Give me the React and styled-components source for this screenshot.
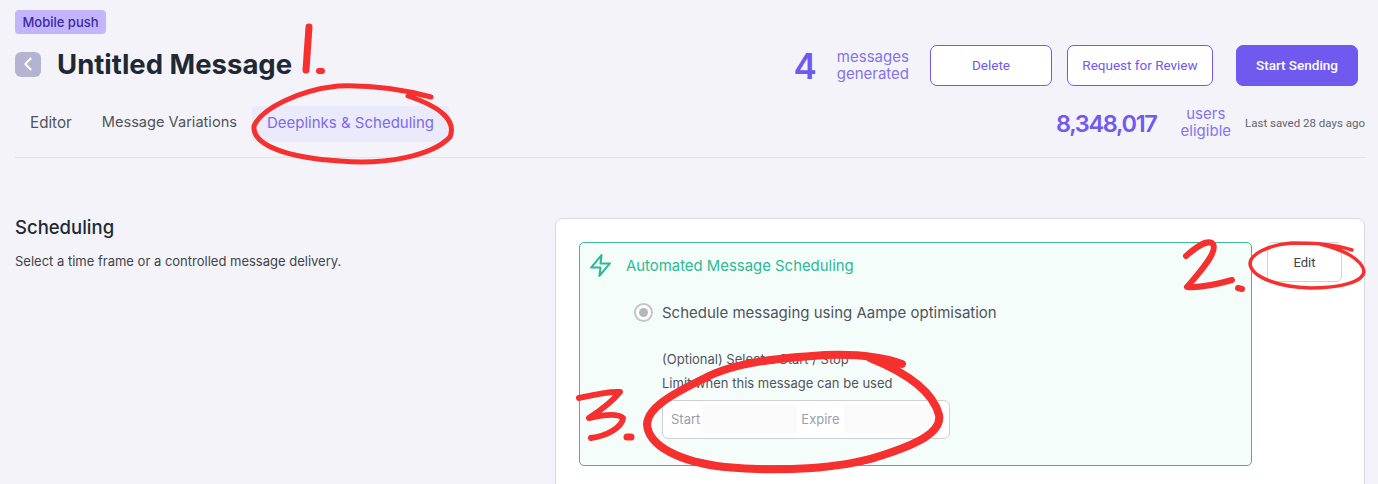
import React from 'react';
import styled, { createGlobalStyle } from 'styled-components';
import { ChevronLeft } from 'lucide-react';

const GlobalStyle = createGlobalStyle`
  html, body {
    margin: 0;
    padding: 0;
    background: #f4f3f9;
    font-family: Inter, "Liberation Sans", sans-serif;
  }
`;

const Page = styled.div`
  position: relative;
  width: 1378px;
  height: 484px;
  overflow: hidden;
  box-sizing: border-box;
  padding: 10px 13px 0 15px;
`;

const Header = styled.header`
  display: flex;
  justify-content: space-between;
  height: 147px;
  border-bottom: 1px solid #e2e2e8;
`;

const LeftColumn = styled.div`
  display: flex;
  flex-direction: column;
`;

const Tag = styled.span`
  align-self: flex-start;
  box-sizing: border-box;
  width: 91px;
  height: 24px;
  display: flex;
  align-items: center;
  justify-content: center;
  background: #c2b5fb;
  border-radius: 4px;
  color: #3f27a6;
  font-size: 13px;
  font-weight: 500;
`;

const TitleRow = styled.div`
  display: flex;
  align-items: center;
  gap: 16px;
  margin-top: 10px;
  height: 40px;
`;

const BackButton = styled.button`
  width: 26px;
  height: 25px;
  padding: 0;
  border: 0;
  border-radius: 6px;
  background: #b4b4d2;
  color: #fff;
  display: flex;
  align-items: center;
  justify-content: center;
`;

const Title = styled.h1`
  margin: 0;
  font-size: 27.5px;
  line-height: 40px;
  font-weight: 700;
  color: #1f2933;
`;

const Tabs = styled.nav`
  display: flex;
  align-items: center;
  margin-top: 22px;
  height: 36px;
`;

const Tab = styled.a`
  padding: 0 15px 3px;
  line-height: 33px;
  font-size: ${(p) => p.$size}px;
  color: ${(p) => (p.$active ? '#7f69ee' : '#4f545c')};
  background: ${(p) => (p.$active ? '#eaeafb' : 'transparent')};
  border-radius: 4px;
`;

const RightColumn = styled.div`
  display: flex;
  flex-direction: column;
  align-items: flex-end;
`;

const ActionRow = styled.div`
  display: flex;
  align-items: center;
  margin-top: 35px;
  margin-right: 7px;
  height: 41px;
`;

const Count = styled.span`
  font-weight: 600;
  color: #7059ee;
  font-size: ${(p) => p.$size}px;
  letter-spacing: ${(p) => p.$spacing || 0}px;
`;

const CountLabel = styled.span`
  text-align: center;
  color: #8573ea;
  font-size: 15px;
  line-height: 17px;
  margin-top: -2px;
  margin-left: ${(p) => p.$left}px;
  margin-right: ${(p) => p.$right}px;
`;

const Button = styled.button`
  box-sizing: border-box;
  width: ${(p) => p.$width}px;
  height: 41px;
  margin-left: ${(p) => p.$left || 0}px;
  padding: 0 0 2px;
  border: 1px solid #7059ee;
  border-radius: 7px;
  background: ${(p) => (p.$primary ? '#7059ee' : '#fff')};
  color: ${(p) => (p.$primary ? '#fff' : '#7059ee')};
  font-family: Roboto, sans-serif;
  font-size: 13.5px;
  font-weight: ${(p) => (p.$primary ? 500 : 400)};
`;

const StatsRow = styled.div`
  display: flex;
  align-items: center;
  margin-top: 17px;
  height: 40px;
`;

const SavedText = styled.span`
  font-family: Roboto, sans-serif;
  font-size: 11.5px;
  color: #5f636b;
`;

const Section = styled.section`
  display: flex;
  margin-top: 60px;
`;

const Intro = styled.div`
  width: 540px;
  flex: none;
`;

const SectionTitle = styled.h2`
  margin: -1px 0 0;
  font-size: 18.5px;
  line-height: 20px;
  font-weight: 500;
  color: #1f2933;
`;

const SectionText = styled.p`
  margin: 16px 0 0;
  font-size: 13px;
  line-height: 16px;
  color: #3f444b;
`;

const Card = styled.div`
  flex: 1;
  display: flex;
  align-items: flex-start;
  box-sizing: border-box;
  height: 300px;
  padding: 23px 22px 0 23px;
  background: #fff;
  border: 1px solid #d9d9df;
  border-radius: 8px;
`;

const SchedulePanel = styled.div`
  box-sizing: border-box;
  width: 673px;
  height: 224px;
  padding: 0 8px;
  background: #f5fdfb;
  border: 1px solid #3fb59a;
  border-radius: 5px;
`;

const PanelHead = styled.div`
  display: flex;
  align-items: center;
  gap: 13px;
  height: 45px;
  color: #2fb893;
  font-size: 14.9px;
`;

const RadioRow = styled.label`
  display: flex;
  align-items: center;
  gap: 9px;
  margin: 4px 0 0 46px;
  height: 40px;
  font-size: 15px;
  color: #4f545c;
`;

const RadioMark = styled.span`
  box-sizing: border-box;
  width: 19px;
  height: 19px;
  border: 2px solid #c4c5c8;
  border-radius: 50%;
  background: #fff;
  display: flex;
  align-items: center;
  justify-content: center;

  &:after {
    content: '';
    width: 9px;
    height: 9px;
    border-radius: 50%;
    background: #b5b6b9;
  }
`;

const FormBlock = styled.div`
  margin: 15px 0 0 74px;
`;

const FormLabel = styled.div`
  font-size: 13px;
  line-height: 24px;
  color: #50545b;
`;

const DateBox = styled.div`
  display: flex;
  align-items: center;
  box-sizing: border-box;
  width: 288px;
  height: 39px;
  margin-top: 5px;
  padding: 0 0 2px 8px;
  background: #fff;
  border: 1px solid #cfd0d6;
  border-radius: 6px;
`;

const DateLabel = styled.span`
  font-size: 13px;
  color: #9a9ea8;
  margin-left: ${(p) => p.$left || 0}px;
`;

const DateField = styled.span`
  width: ${(p) => p.$width}px;
  height: 28px;
  margin-left: ${(p) => p.$left}px;
  background: #fafafa;
`;

const EditButton = styled.button`
  box-sizing: border-box;
  width: 75px;
  height: 40px;
  margin-left: 15px;
  padding: 0;
  background: #fff;
  border: 1px solid #d2d3d9;
  border-radius: 6px;
  color: #3d4149;
  font-family: Roboto, sans-serif;
  font-size: 13px;
`;

const Markup = styled.svg`
  position: absolute;
  left: 0;
  top: 0;
  pointer-events: none;
`;

const Ink = styled.path`
  fill: none;
  stroke: #f5302f;
  stroke-width: ${(p) => p.$w}px;
  stroke-linecap: round;
  stroke-linejoin: round;
`;

// the red pen marks someone drew over the screenshot
const Annotations = () => (
  <Markup width="1378" height="484" viewBox="0 0 1378 484">
    <Ink $w={7} d="M309 27 C308 40 307 56 306 70" />
    <Ink $w={6} d="M319 71 L322 71" />
    <Ink $w={5} d="M431 97 C405 90 370 85 338 86 C300 90 262 108 254 126 C252 146 290 158 340 161 C385 165 432 156 450 137 C456 122 444 108 408 96" />
    <Ink $w={6} d="M1186 256 C1195 248 1205 240 1212 243 C1220 250 1200 272 1187 287 C1200 288 1218 284 1232 280" />
    <Ink $w={6} d="M1238 288 L1242 289" />
    <Ink $w={3.5} d="M1352 250 C1330 243 1310 243 1292 243 C1268 245 1250 254 1250 264 C1252 278 1280 287 1310 288 C1340 288 1364 282 1364 271 C1362 260 1345 250 1320 244" />
    <Ink $w={6} d="M579 398 C592 395 608 391 620 392 C612 402 598 412 589 418 C602 415 618 413 623 418 C622 428 606 436 591 438" />
    <Ink $w={7} d="M627 437 L631 437" />
    <Ink $w={8} d="M902 364 C880 356 850 354 825 355 C780 358 735 362 705 378 C670 395 648 408 647 424 C648 446 680 462 725 467 C780 472 840 469 880 456 C918 444 942 432 939 415 C934 395 912 375 870 358" />
    <Ink $w={5} d="M690 460 C740 474 820 473 875 459" />
  </Markup>
);

const App = () => (
  <Page>
    <GlobalStyle />
    <Header>
      <LeftColumn>
        <Tag>Mobile push</Tag>
        <TitleRow>
          <BackButton><ChevronLeft size={22} strokeWidth={2} /></BackButton>
          <Title>Untitled Message</Title>
        </TitleRow>
        <Tabs>
          <Tab $size={15.2}>Editor</Tab>
          <Tab $size={14.6}>Message Variations</Tab>
          <Tab $size={15} $active>Deeplinks &amp; Scheduling</Tab>
        </Tabs>
      </LeftColumn>
      <RightColumn>
        <ActionRow>
          <Count $size={35}>4</Count>
          <CountLabel $left={20} $right={21}>messages<br />generated</CountLabel>
          <Button $width={122}>Delete</Button>
          <Button $width={146} $left={15}>Request for Review</Button>
          <Button $width={122} $left={23} $primary>Start Sending</Button>
        </ActionRow>
        <StatsRow>
          <Count $size={23.5} $spacing={-1.3}>8,348,017</Count>
          <CountLabel $left={24} $right={14}>users<br />eligible</CountLabel>
          <SavedText>Last saved 28 days ago</SavedText>
        </StatsRow>
      </RightColumn>
    </Header>
    <Section>
      <Intro>
        <SectionTitle>Scheduling</SectionTitle>
        <SectionText>Select a time frame or a controlled message delivery.</SectionText>
      </Intro>
      <Card>
        <SchedulePanel>
          <PanelHead>
            <svg width="25" height="25" viewBox="0 0 24 24" fill="none" stroke="currentColor" strokeWidth="2" strokeLinejoin="round">
              <polygon points="13 2 3 14 12 14 11 22 21 10 12 10 13 2" />
            </svg>
            Automated Message Scheduling
          </PanelHead>
          <RadioRow>
            <RadioMark />
            Schedule messaging using Aampe optimisation
          </RadioRow>
          <FormBlock>
            <FormLabel>(Optional) Select a Start / Stop</FormLabel>
            <FormLabel>Limit when this message can be used</FormLabel>
            <DateBox>
              <DateLabel>Start</DateLabel>
              <DateField $width={94} $left={3} />
              <DateLabel $left={4}>Expire</DateLabel>
              <DateField $width={90} $left={4} />
            </DateBox>
          </FormBlock>
        </SchedulePanel>
        <EditButton>Edit</EditButton>
      </Card>
    </Section>
    <Annotations />
  </Page>
);

export default App;
